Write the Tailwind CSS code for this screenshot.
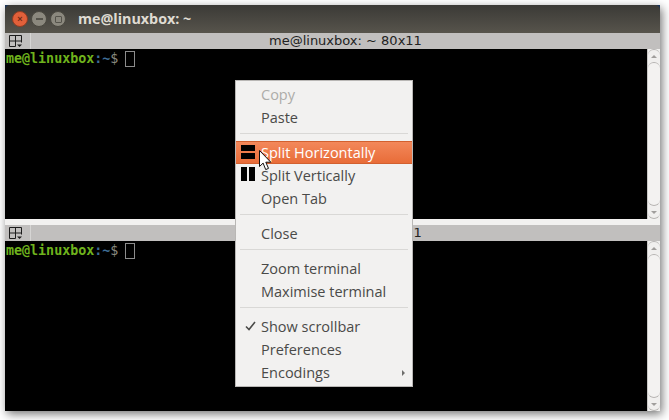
<!DOCTYPE html>
<html lang="en">
<head>
    <meta charset="UTF-8">
    <title>Terminator</title>
    <script src="https://cdn.jsdelivr.net/npm/@tailwindcss/browser@4"></script>
</head>
<body class="bg-white">
    <div class="relative w-[669px] h-[420px] overflow-hidden pl-[5px] pt-[5px]">
        <!-- Window -->
        <div class="w-[655px] h-[406px] flex flex-col bg-[#1d3557] shadow-[2px_3px_9px_rgba(0,0,0,0.55)]">
            <!-- Title bar -->
            <div class="h-[28px] shrink-0 flex items-center rounded-t-[5px] bg-gradient-to-b from-[#3b3a36] to-[#57544c] pl-[7px]">
                <div class="flex items-center gap-[3px]">
                    <div class="w-[16px] h-[16px] rounded-full bg-[#e2603a] border border-[#8f3d24] flex items-center justify-center text-[#6e2a15] text-[9px] font-bold leading-none font-['Liberation_Sans',sans-serif]">×</div>
                    <div class="w-[16px] h-[16px] rounded-full bg-[#8b887e] border border-[#4a4840] flex items-center justify-center"><div class="w-[7px] h-[2px] bg-[#55534b]"></div></div>
                    <div class="w-[16px] h-[16px] rounded-full bg-[#8b887e] border border-[#4a4840] flex items-center justify-center"><div class="w-[7px] h-[7px] border border-[#55534b] rounded-[1px]"></div></div>
                </div>
                <span class="ml-[12px] text-[14.3px] font-bold text-[#dfdbd2] font-['Open_Sans',sans-serif]">me@linuxbox: ~</span>
            </div>

            <!-- Top pane -->
            <div class="h-[16px] shrink-0 flex items-center bg-[#c1bfbe] relative">
                <div class="w-[26px] h-full flex items-center pl-[4px] border-r border-[#d6d5d4]">
                    <svg width="14" height="13" viewBox="0 0 14 13" fill="none" stroke="#1c1c1c" stroke-width="1"><path d="M.5.5h12v7M.5.5v11h6M.5 6h12M6.5.5v11"/><path d="M8 9.5h5l-2.500 2.500z" fill="#1c1c1c" stroke="none"/></svg>
                </div>
                <span class="absolute left-[264px] text-[13px] leading-[16px] text-[#222] font-['DejaVu_Sans',sans-serif]">me@linuxbox: ~ 80x11</span>
            </div>
            <div class="h-[170px] shrink-0 flex bg-black">
                <div class="flex-1 pl-px pt-px font-['DejaVu_Sans_Mono',monospace] text-[13.33px] leading-[17px] font-bold flex items-start">
                    <span class="text-[#6fb31d]">me@linuxbox</span><span class="text-[#3f6d96]">:~</span><span class="text-[#8a8a80] font-normal">$</span>
                    <span class="ml-[7px] mt-px w-[10px] h-[16px] border border-[#8c8c8c]"></span>
                </div>
                <div class="w-[13px] flex flex-col items-center bg-[#f0efee] border-l border-[#c9c8c6]">
                    <div class="h-[13px] w-full flex items-center justify-center rounded-t-[6px] border-t border-[#b5b3b1]"><div class="w-0 h-0 border-x-[3px] border-x-transparent border-b-[3px] border-b-[#a09e9c]"></div></div>
                    <div class="flex-1 w-full rounded-[6px] bg-[#f3f2f1] border-y border-[#b5b3b1]"></div>
                    <div class="h-[13px] w-full flex items-center justify-center rounded-b-[6px] border-b border-[#b5b3b1]"><div class="w-0 h-0 border-x-[3px] border-x-transparent border-t-[3px] border-t-[#a09e9c]"></div></div>
                </div>
            </div>

            <!-- Handle between panes -->
            <div class="h-[6px] shrink-0 bg-[#f2f1f0]"></div>

            <!-- Bottom pane -->
            <div class="h-[16px] shrink-0 flex items-center bg-[#c1bfbe] relative">
                <div class="w-[26px] h-full flex items-center pl-[4px] border-r border-[#d6d5d4]">
                    <svg width="14" height="13" viewBox="0 0 14 13" fill="none" stroke="#1c1c1c" stroke-width="1"><path d="M.5.5h12v7M.5.5v11h6M.5 6h12M6.5.5v11"/><path d="M8 9.5h5l-2.500 2.500z" fill="#1c1c1c" stroke="none"/></svg>
                </div>
                <span class="absolute left-[264px] text-[13px] leading-[16px] text-[#222] font-['DejaVu_Sans',sans-serif]">me@linuxbox: ~ 80x11</span>
            </div>
            <div class="flex-1 flex bg-black">
                <div class="flex-1 pl-px pt-px font-['DejaVu_Sans_Mono',monospace] text-[13.33px] leading-[17px] font-bold flex items-start">
                    <span class="text-[#6fb31d]">me@linuxbox</span><span class="text-[#3f6d96]">:~</span><span class="text-[#8a8a80] font-normal">$</span>
                    <span class="ml-[7px] mt-px w-[10px] h-[16px] border border-[#8c8c8c]"></span>
                </div>
                <div class="w-[13px] flex flex-col items-center bg-[#f0efee] border-l border-[#c9c8c6]">
                    <div class="h-[13px] w-full flex items-center justify-center rounded-t-[6px] border-t border-[#b5b3b1]"><div class="w-0 h-0 border-x-[3px] border-x-transparent border-b-[3px] border-b-[#a09e9c]"></div></div>
                    <div class="flex-1 w-full rounded-[6px] bg-[#f3f2f1] border-y border-[#b5b3b1]"></div>
                    <div class="h-[13px] w-full flex items-center justify-center rounded-b-[6px] border-b border-[#b5b3b1]"><div class="w-0 h-0 border-x-[3px] border-x-transparent border-t-[3px] border-t-[#a09e9c]"></div></div>
                </div>
            </div>
        </div>

        <!-- Context menu -->
        <div class="absolute left-[235px] top-[80px] w-[178px] h-[307px] bg-[#f2f1f0] border border-[#b9b7b5] pt-[2px] font-['Open_Sans',sans-serif] text-[14.500px] text-[#4a4a48]">
            <div class="h-[23px] flex items-center pl-[25px] text-[#adaca9]">Copy</div>
            <div class="h-[23px] flex items-center pl-[25px]">Paste</div>
            <div class="h-[12px] pt-[4px] px-[4px]"><div class="h-px bg-[#d9d8d6]"></div></div>
            <div class="h-[23px] flex items-center pl-[25px] relative text-white bg-gradient-to-b from-[#f3885a] to-[#e86c38] border-y border-[#d2602f]">
                <div class="absolute left-[5px] top-[3px] w-[14px] flex flex-col gap-[2px]">
                    <div class="h-[6px] bg-black"></div>
                    <div class="h-[6px] bg-black"></div>
                </div>
                Split Horizontally
            </div>
            <div class="h-[23px] flex items-center pl-[25px] relative">
                <div class="absolute left-[5px] top-[3px] h-[14px] flex gap-[2px]">
                    <div class="w-[6px] bg-black"></div>
                    <div class="w-[6px] bg-black"></div>
                </div>
                Split Vertically
            </div>
            <div class="h-[23px] flex items-center pl-[25px]">Open Tab</div>
            <div class="h-[12px] pt-[4px] px-[4px]"><div class="h-px bg-[#d9d8d6]"></div></div>
            <div class="h-[23px] flex items-center pl-[25px]">Close</div>
            <div class="h-[12px] pt-[4px] px-[4px]"><div class="h-px bg-[#d9d8d6]"></div></div>
            <div class="h-[23px] flex items-center pl-[25px]">Zoom terminal</div>
            <div class="h-[23px] flex items-center pl-[25px]">Maximise terminal</div>
            <div class="h-[12px] pt-[4px] px-[4px]"><div class="h-px bg-[#d9d8d6]"></div></div>
            <div class="h-[23px] flex items-center pl-[25px] relative">
                <svg class="absolute left-[9px] top-[6px]" width="11" height="10" viewBox="0 0 11 10" fill="none" stroke="#4a4a48" stroke-width="1.600"><path d="M1 5.500l3 3L10 1"/></svg>
                Show scrollbar
            </div>
            <div class="h-[23px] flex items-center pl-[25px]">Preferences</div>
            <div class="h-[23px] flex items-center pl-[25px] relative">
                Encodings
                <div class="absolute right-[7px] top-[9px] w-0 h-0 border-y-[3px] border-y-transparent border-l-[3px] border-l-[#6e6e6c]"></div>
            </div>
        </div>

        <!-- Mouse pointer -->
        <svg class="absolute left-[259px] top-[150px]" width="13" height="21" viewBox="0 0 13 21"><path d="M.5.5v16l3.600-3.400 2.600 6.500 2.800-1.200-2.700-6.200h5z" fill="#fff" stroke="#111" stroke-width="1"/></svg>
    </div>
</body>
</html>
